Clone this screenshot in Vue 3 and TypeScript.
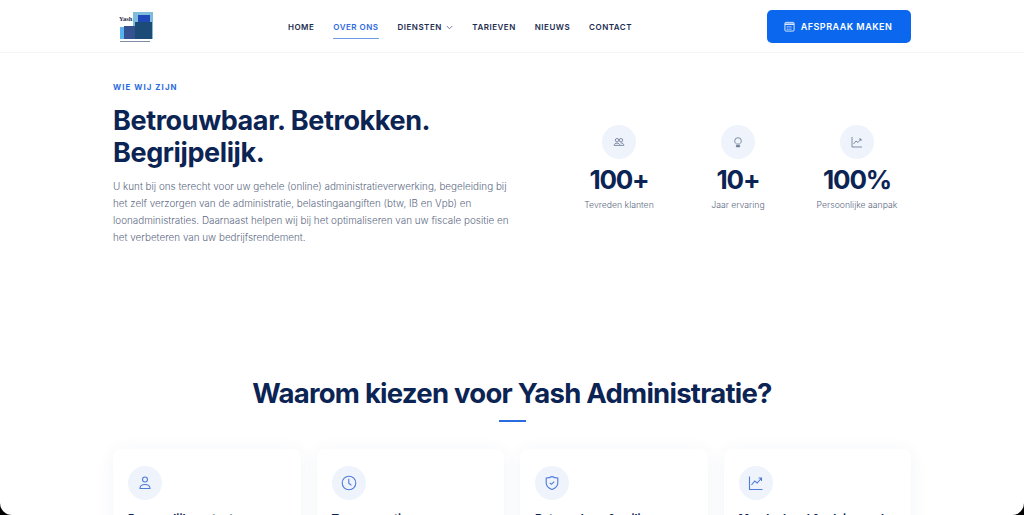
<script setup lang="ts">
const navItems = [
  { label: 'HOME', active: false, caret: false },
  { label: 'OVER ONS', active: true, caret: false },
  { label: 'DIENSTEN', active: false, caret: true },
  { label: 'TARIEVEN', active: false, caret: false },
  { label: 'NIEUWS', active: false, caret: false },
  { label: 'CONTACT', active: false, caret: false },
]

const stats = [
  { value: '100+', label: 'Tevreden klanten', icon: 'people' },
  { value: '10+', label: 'Jaar ervaring', icon: 'bulb' },
  { value: '100%', label: 'Persoonlijke aanpak', icon: 'chart' },
]

const cards = [
  { title: 'Persoonlijk contact', icon: 'user' },
  { title: 'Transparantie', icon: 'clock' },
  { title: 'Betrouwbaar & veilig', icon: 'shield' },
  { title: 'Meedenkend & adviserend', icon: 'chart' },
]
</script>

<template>
  <div class="page">
    <header class="topbar">
      <div class="topbar-inner">
        <svg class="logo" width="36" height="36" viewBox="0 0 36 36">
          <rect x="14" y="3" width="20" height="27" fill="#7fbcdc" />
          <rect x="1" y="18" width="6" height="12" fill="#58b2ee" />
          <rect x="5" y="17" width="14" height="13" fill="#35518f" />
          <rect x="19" y="6" width="12" height="9" fill="#2148b8" />
          <rect x="16" y="13" width="17" height="17" fill="#1c4b78" />
          <text x="0" y="11.500" class="logo-name">Yash</text>
          <rect x="1" y="32" width="30" height="1" fill="#7d8ba6" />
        </svg>
        <nav class="nav">
          <a v-for="item in navItems" :key="item.label" class="nav-item" :class="{ active: item.active }">
            {{ item.label }}
            <svg v-if="item.caret" class="caret" width="7" height="5" viewBox="0 0 7 5">
              <path d="M.8 1 3.500 3.800 6.200 1" fill="none" stroke="#55617c" stroke-width=".8" />
            </svg>
          </a>
        </nav>
        <button class="cta">
          <svg width="11" height="11" viewBox="0 0 12 12" fill="none" stroke="#e6efff" stroke-width="1">
            <rect x="1" y="1.500" width="10" height="9.500" rx="1" />
            <path d="M1 3.500h10" stroke-width="1.600" />
            <path d="M3 6h6M3 7.600h6M3 9.200h6" stroke-dasharray="1 1" />
          </svg>
          AFSPRAAK MAKEN
        </button>
      </div>
    </header>

    <section class="intro">
      <div class="intro-text">
        <div class="eyebrow">WIE WIJ ZIJN</div>
        <h1>Betrouwbaar. Betrokken.<br />Begrijpelijk.</h1>
        <p>
          U kunt bij ons terecht voor uw gehele (online) administratieverwerking, begeleiding bij
          het zelf verzorgen van de administratie, belastingaangiften (btw, IB en Vpb) en
          loonadministraties. Daarnaast helpen wij bij het optimaliseren van uw fiscale positie en
          het verbeteren van uw bedrijfsrendement.
        </p>
      </div>
      <div class="stats">
        <div v-for="stat in stats" :key="stat.label" class="stat">
          <div class="circle">
            <svg width="12" height="12" viewBox="0 0 12 12" fill="none" stroke="#66738f" stroke-width=".8">
              <template v-if="stat.icon === 'people'">
                <circle cx="4" cy="4.200" r="1.700" />
                <circle cx="8" cy="4.200" r="1.700" />
                <path d="M1.200 9.400c0-3 5.600-3 5.600 0zM7.600 7c1.700-.2 3.200.6 3.200 2.400H7" />
              </template>
              <template v-else-if="stat.icon === 'bulb'">
                <path d="M4.400 8C3.300 7.200 2.700 6.200 2.700 5a3.300 3.300 0 0 1 6.600 0c0 1.200-.6 2.200-1.700 3z" />
                <path d="M4.400 9.500h3.200v1.300H4.400z" fill="#66738f" />
              </template>
              <template v-else>
                <path d="M1 1v10h10" />
                <path d="m2.500 8 2.500-3 2 1.500L10 3M8 3h2v2" />
              </template>
            </svg>
          </div>
          <div class="stat-value">{{ stat.value }}</div>
          <div class="stat-label">{{ stat.label }}</div>
        </div>
      </div>
    </section>

    <section class="why">
      <h2>Waarom kiezen voor Yash Administratie?</h2>
      <div class="rule"></div>
      <div class="cards">
        <div v-for="card in cards" :key="card.title" class="card">
          <div class="card-icon">
            <svg width="16" height="16" viewBox="0 0 16 16" fill="none" stroke="#4f7bd9" stroke-width="1.100">
              <template v-if="card.icon === 'user'">
                <circle cx="8" cy="4.500" r="2.500" />
                <path d="M3 13.500c0-2.500 1.600-4 5-4s5 1.500 5 4z" />
              </template>
              <template v-else-if="card.icon === 'clock'">
                <circle cx="8" cy="8" r="6.800" />
                <path d="M7.800 3.800v4.400l2.600 2.200" />
              </template>
              <template v-else-if="card.icon === 'shield'">
                <path d="M8 1.500c1.800 1.200 3.600 1.500 5.800 1.500v5c0 3-2.300 5.200-5.800 6.500C4.500 13.200 2.200 11 2.200 8V3C4.400 3 6.200 2.700 8 1.500z" />
                <path d="m5.800 7.800 1.600 1.500 2.800-2.600" />
              </template>
              <template v-else>
                <path d="M1.500 1.500v13h13" />
                <path d="m3.500 10 3.200-4 2.500 2 4.300-5M10.500 3h3v3" />
              </template>
            </svg>
          </div>
          <h3>{{ card.title }}</h3>
        </div>
      </div>
    </section>
  </div>
</template>

<style>
html,
body {
  margin: 0;
  background: #000;
  overflow: hidden;
}
</style>

<style scoped>
.page {
  height: 515px;
  overflow: hidden;
  background: #fff;
  border-radius: 0 0 12px 12px;
  font-family: Inter, "Liberation Sans", sans-serif;
  color: #0b2454;
}

.topbar {
  height: 53px;
  border-bottom: 1px solid #f5f6f8;
  box-sizing: border-box;
}

.topbar-inner {
  width: 798px;
  margin: 0 auto;
  height: 100%;
  display: flex;
  align-items: center;
  justify-content: space-between;
}

.logo {
  margin-left: 6px;
  margin-top: 1px;
}

.logo-name {
  font-family: "Liberation Serif", serif;
  font-size: 6.500px;
  font-weight: 700;
  fill: #1d2b4a;
}

.nav {
  display: flex;
  gap: 19px;
  margin-right: 2px;
}

.nav-item {
  display: block;
  padding: 7px 0 5px;
  font-size: 8px;
  font-weight: 600;
  letter-spacing: .5px;
  line-height: 12px;
  color: #1c2c50;
  border-bottom: 1px solid transparent;
}

.nav-item.active {
  color: #2f6ae0;
  border-bottom-color: #6f9be8;
}

.caret {
  margin-left: 2px;
}

.cta {
  width: 144px;
  height: 33px;
  padding: 0 2px 0 0;
  display: flex;
  align-items: center;
  justify-content: center;
  gap: 6px;
  border: 0;
  border-radius: 5px;
  background: #0b68ee;
  color: #fff;
  font-family: inherit;
  font-size: 9px;
  font-weight: 600;
  letter-spacing: .5px;
}

.intro {
  width: 798px;
  margin: 0 auto;
  display: flex;
  justify-content: space-between;
}

.intro-text {
  width: 404px;
  padding-top: 29px;
}

.eyebrow {
  font-size: 7.800px;
  font-weight: 700;
  letter-spacing: 1.100px;
  line-height: 11px;
  color: #2a6be0;
}

h1 {
  margin: 12px 0 0;
  font-size: 27px;
  font-weight: 700;
  line-height: 32px;
  letter-spacing: -.4px;
  color: #0b2454;
}

p {
  margin: 9px 0 0;
  font-size: 9.900px;
  font-weight: 300;
  line-height: 17px;
  color: #5e6a84;
}

.stats {
  display: flex;
  width: 338px;
  margin-top: 72px;
  margin-right: 4px;
  justify-content: space-between;
}

.stat {
  width: 100px;
  display: flex;
  flex-direction: column;
  align-items: center;
}

.circle {
  width: 34px;
  height: 34px;
  border-radius: 50%;
  background: #eef3fc;
  display: flex;
  align-items: center;
  justify-content: center;
}

.stat-value {
  margin-top: 6px;
  font-size: 26px;
  font-weight: 700;
  line-height: 30px;
  letter-spacing: -1.200px;
  color: #0b2454;
}

.stat-label {
  margin-top: 4px;
  font-size: 8.700px;
  font-weight: 300;
  line-height: 12px;
  color: #5c6880;
}

.why {
  margin-top: 131px;
}

h2 {
  margin: 0;
  text-align: center;
  font-size: 27.500px;
  font-weight: 700;
  line-height: 32px;
  letter-spacing: -.75px;
  color: #0b2454;
}

.rule {
  width: 27px;
  height: 2px;
  margin: 11px auto 0;
  background: #2a6be0;
}

.cards {
  width: 798px;
  margin: 27px auto 0;
  display: grid;
  grid-template-columns: repeat(4, 1fr);
  gap: 16px;
}

.card {
  height: 120px;
  box-sizing: border-box;
  padding: 17px 15px;
  border-radius: 8px;
  background: #fff;
  box-shadow: 0 2px 18px rgba(40, 70, 130, .06);
}

.card-icon {
  width: 34px;
  height: 34px;
  border-radius: 50%;
  background: #eef3fc;
  display: flex;
  align-items: center;
  justify-content: center;
}

h3 {
  margin: 11px 0 0;
  font-size: 11.200px;
  font-weight: 700;
  line-height: 16px;
  color: #0b2454;
}
</style>
